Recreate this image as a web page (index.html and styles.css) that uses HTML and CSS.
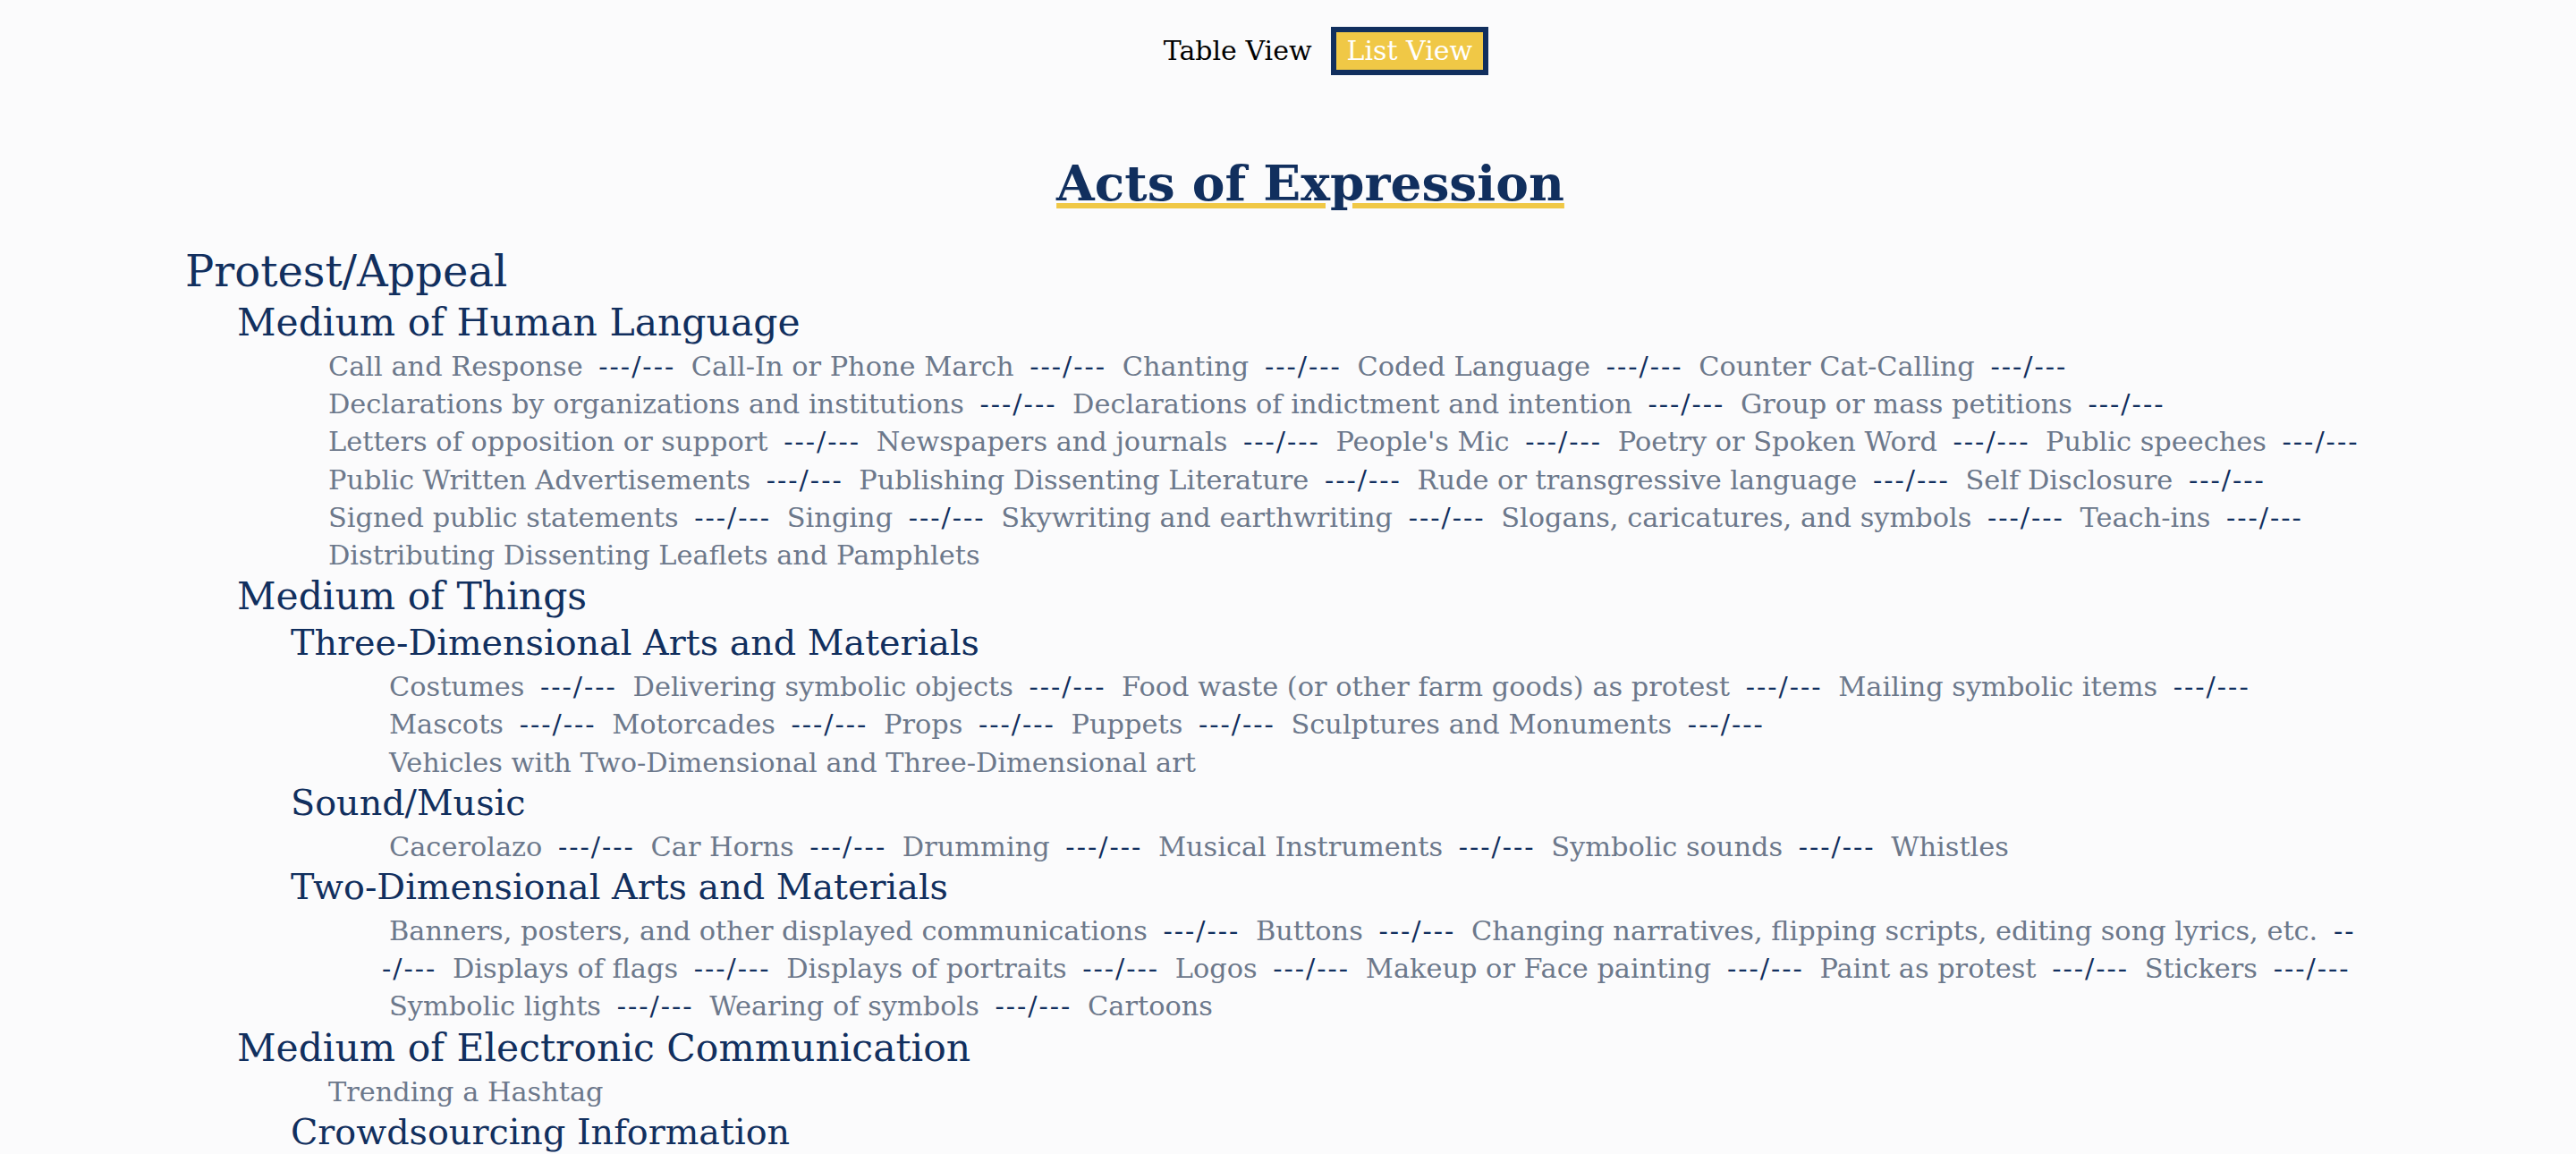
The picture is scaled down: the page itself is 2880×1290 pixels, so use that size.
FILE: index.html
```html
<!DOCTYPE html>
<html lang="en">
<head>
<meta charset="utf-8">
<title>Acts of Expression</title>
<link rel="stylesheet" href="styles.css">
</head>
<body>
<div class="toggle">
  <span class="toggle-btn">Table View</span>
  <span class="toggle-btn active">List View</span>
</div>
<header class="page-head">
  <h1 class="title">Acts of Expression</h1>
</header>
<main class="tree">
  <section class="cat">
    <h2 class="l1">Protest/Appeal</h2>
    <div class="medium">
      <h3 class="l2">Medium of Human Language</h3>
      <p class="items"><span class="item">Call and Response</span> <span class="sep">---/---</span> <span class="item">Call-In or Phone March</span> <span class="sep">---/---</span> <span class="item">Chanting</span> <span class="sep">---/---</span> <span class="item">Coded Language</span> <span class="sep">---/---</span> <span class="item">Counter Cat-Calling</span> <span class="sep">---/---</span> <span class="item">Declarations by organizations and institutions</span> <span class="sep">---/---</span> <span class="item">Declarations of indictment and intention</span> <span class="sep">---/---</span> <span class="item">Group or mass petitions</span> <span class="sep">---/---</span> <span class="item">Letters of opposition or support</span> <span class="sep">---/---</span> <span class="item">Newspapers and journals</span> <span class="sep">---/---</span> <span class="item">People's Mic</span> <span class="sep">---/---</span> <span class="item">Poetry or Spoken Word</span> <span class="sep">---/---</span> <span class="item">Public speeches</span> <span class="sep">---/---</span> <span class="item">Public Written Advertisements</span> <span class="sep">---/---</span> <span class="item">Publishing Dissenting Literature</span> <span class="sep">---/---</span> <span class="item">Rude or transgressive language</span> <span class="sep">---/---</span> <span class="item">Self Disclosure</span> <span class="sep">---/---</span> <span class="item">Signed public statements</span> <span class="sep">---/---</span> <span class="item">Singing</span> <span class="sep">---/---</span> <span class="item">Skywriting and earthwriting</span> <span class="sep">---/---</span> <span class="item">Slogans, caricatures, and symbols</span> <span class="sep">---/---</span> <span class="item">Teach-ins</span> <span class="sep">---/---</span> <span class="item">Distributing Dissenting Leaflets and Pamphlets</span></p>
    </div>
    <div class="medium">
      <h3 class="l2">Medium of Things</h3>
      <div class="sub">
        <h4 class="l3">Three-Dimensional Arts and Materials</h4>
        <p class="items"><span class="item">Costumes</span> <span class="sep">---/---</span> <span class="item">Delivering symbolic objects</span> <span class="sep">---/---</span> <span class="item">Food waste (or other farm goods) as protest</span> <span class="sep">---/---</span> <span class="item">Mailing symbolic items</span> <span class="sep">---/---</span> <span class="item">Mascots</span> <span class="sep">---/---</span> <span class="item">Motorcades</span> <span class="sep">---/---</span> <span class="item">Props</span> <span class="sep">---/---</span> <span class="item">Puppets</span> <span class="sep">---/---</span> <span class="item">Sculptures and Monuments</span> <span class="sep">---/---</span> <span class="item">Vehicles with Two-Dimensional and Three-Dimensional art</span></p>
      </div>
      <div class="sub">
        <h4 class="l3">Sound/Music</h4>
        <p class="items"><span class="item">Cacerolazo</span> <span class="sep">---/---</span> <span class="item">Car Horns</span> <span class="sep">---/---</span> <span class="item">Drumming</span> <span class="sep">---/---</span> <span class="item">Musical Instruments</span> <span class="sep">---/---</span> <span class="item">Symbolic sounds</span> <span class="sep">---/---</span> <span class="item">Whistles</span></p>
      </div>
      <div class="sub">
        <h4 class="l3">Two-Dimensional Arts and Materials</h4>
        <p class="items"><span class="item">Banners, posters, and other displayed communications</span> <span class="sep">---/---</span> <span class="item">Buttons</span> <span class="sep">---/---</span> <span class="item">Changing narratives, flipping scripts, editing song lyrics, etc.</span> <span class="sep">---/---</span> <span class="item">Displays of flags</span> <span class="sep">---/---</span> <span class="item">Displays of portraits</span> <span class="sep">---/---</span> <span class="item">Logos</span> <span class="sep">---/---</span> <span class="item">Makeup or Face painting</span> <span class="sep">---/---</span> <span class="item">Paint as protest</span> <span class="sep">---/---</span> <span class="item">Stickers</span> <span class="sep">---/---</span> <span class="item">Symbolic lights</span> <span class="sep">---/---</span> <span class="item">Wearing of symbols</span> <span class="sep">---/---</span> <span class="item">Cartoons</span></p>
      </div>
    </div>
    <div class="medium">
      <h3 class="l2">Medium of Electronic Communication</h3>
      <p class="items"><span class="item">Trending a Hashtag</span></p>
      <div class="sub">
        <h4 class="l3">Crowdsourcing Information</h4>
      </div>
    </div>
  </section>
</main>
</body>
</html>
```
FILE: styles.css
```css
html, body {
  margin: 0;
  padding: 0;
  background: #fbfbfc;
}
body {
  font-family: "DejaVu Serif", "Liberation Serif", serif;
  color: #112f5e;
}
.toggle {
  display: flex;
  justify-content: center;
  align-items: center;
  gap: 21px;
  padding: 30px 0 0 85px;
}
.toggle-btn {
  font-size: 30px;
  line-height: 42px;
  color: #000;
  border: 6px solid transparent;
  padding: 0 12px;
}
.toggle-btn:first-child {
  border: 0;
  padding: 0;
}
.toggle-btn.active {
  background: #f0c846;
  border-color: #112f5e;
  color: #fff;
}
.page-head {
  padding-left: 50px;
  text-align: center;
  margin-top: 86px;
}
.title {
  margin: 0;
  font-size: 55px;
  line-height: 70px;
  font-weight: bold;
  color: #112f5e;
  text-decoration: underline;
  text-decoration-color: #f0c846;
  text-decoration-thickness: 6px;
  text-underline-offset: 3px;
}
.tree {
  padding: 32px 230px 0 207px;
}
.l1, .l2, .l3 {
  margin: 0;
  font-weight: normal;
  color: #112f5e;
}
.l1 {
  font-size: 48px;
  line-height: 62px;
  margin-bottom: 2px;
}
.medium {
  margin-left: 58px;
}
.l2 {
  font-size: 42.5px;
  line-height: 50px;
  margin-bottom: 3px;
}
.sub {
  margin-left: 60px;
}
.l3 {
  font-size: 39.7px;
  line-height: 53px;
  margin-top: -3px;
  margin-bottom: 2px;
}
.items {
  margin: 0;
  padding-left: 94px;
  font-size: 30.4px;
  line-height: 42.2px;
  color: #6c788b;
}
.sub .items {
  padding-left: 102px;
}
.item {
  margin: 0 8px;
  white-space: nowrap;
}
.sep {
  color: #112f5e;
  letter-spacing: 2px;
}
```
